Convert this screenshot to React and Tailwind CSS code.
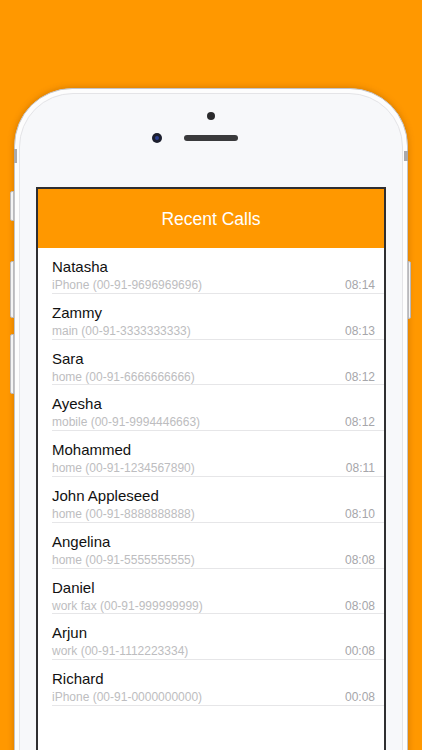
import React from 'react';

const calls = [
  { name: 'Natasha', label: 'iPhone (00-91-9696969696)', time: '08:14' },
  { name: 'Zammy', label: 'main (00-91-3333333333)', time: '08:13' },
  { name: 'Sara', label: 'home (00-91-6666666666)', time: '08:12' },
  { name: 'Ayesha', label: 'mobile (00-91-9994446663)', time: '08:12' },
  { name: 'Mohammed', label: 'home (00-91-1234567890)', time: '08:11' },
  { name: 'John Appleseed', label: 'home (00-91-8888888888)', time: '08:10' },
  { name: 'Angelina', label: 'home (00-91-5555555555)', time: '08:08' },
  { name: 'Daniel', label: 'work fax (00-91-999999999)', time: '08:08' },
  { name: 'Arjun', label: 'work (00-91-1112223334)', time: '00:08' },
  { name: 'Richard', label: 'iPhone (00-91-0000000000)', time: '00:08' },
];

function CallRow({ call }) {
  return (
    <div className="ml-[14px] h-[45.8px] box-border border-b border-[#e6e6e8] pr-[9px] pt-[10px]">
      <div className="text-[15px] leading-[18px] text-[#111111]">{call.name}</div>
      <div className="mt-[2px] flex items-baseline justify-between leading-[14px]">
        <span className="text-[12px] text-[#bdbdc0]">{call.label}</span>
        <span className="text-[12px] text-[#a6a6aa]">{call.time}</span>
      </div>
    </div>
  );
}

export default function App() {
  return (
    <div
      className="h-[750px] w-full overflow-hidden bg-[#ff9800] px-[14px] pt-[88px]"
      style={{ fontFamily: '"Liberation Sans", Arial, sans-serif' }}
    >
      <div className="relative h-[700px] rounded-t-[58px] border border-[#c4c4c7] bg-[#fdfdfd] p-[4px] shadow-[0_0_6px_rgba(120,60,0,0.35)]">
        {/* side buttons */}
        <div className="absolute left-[-5px] top-[102px] h-[30px] w-[4px] rounded-l-[2px] border border-[#b9b9bc] bg-[#f4f4f4]" />
        <div className="absolute left-[-5px] top-[172px] h-[57px] w-[4px] rounded-l-[2px] border border-[#b9b9bc] bg-[#f4f4f4]" />
        <div className="absolute left-[-5px] top-[245px] h-[60px] w-[4px] rounded-l-[2px] border border-[#b9b9bc] bg-[#f4f4f4]" />
        <div className="absolute right-[-4px] top-[172px] h-[58px] w-[3px] rounded-r-[2px] border border-[#b9b9bc] bg-[#f4f4f4]" />
        {/* antenna bands */}
        <div className="absolute left-[-1px] top-[60px] h-[14px] w-[3px] bg-[#a9a9ac]" />
        <div className="absolute right-[-1px] top-[62px] h-[10px] w-[4px] bg-[#a9a9ac]" />

        <div className="flex h-full flex-col rounded-t-[54px] border border-[#e4e4e7] bg-[#f7f8fa]">
          <div className="flex h-[93px] flex-col items-center">
            <div className="mt-[18px] h-[8px] w-[8px] rounded-full bg-[#2a2a2c]" />
            <div className="mt-[13px] flex items-center gap-[22px]">
              <div className="flex h-[10px] w-[10px] items-center justify-center rounded-full bg-[#1c1f2e]">
                <div className="h-[4px] w-[4px] rounded-full bg-[#2b3f8f]" />
              </div>
              <div className="h-[6px] w-[54px] rounded-full bg-[#3a3a3c]" />
              <div className="h-[10px] w-[10px]" />
            </div>
          </div>

          <div className="mx-[16px] flex-1 border-2 border-b-0 border-[#2f2f31] bg-white">
            <div className="flex h-[59px] items-center justify-center bg-[#ff9800] pt-[2px] text-[17.5px] text-white">
              Recent Calls
            </div>
            {calls.map((call) => (
              <CallRow key={call.name} call={call} />
            ))}
          </div>
        </div>
      </div>
    </div>
  );
}
